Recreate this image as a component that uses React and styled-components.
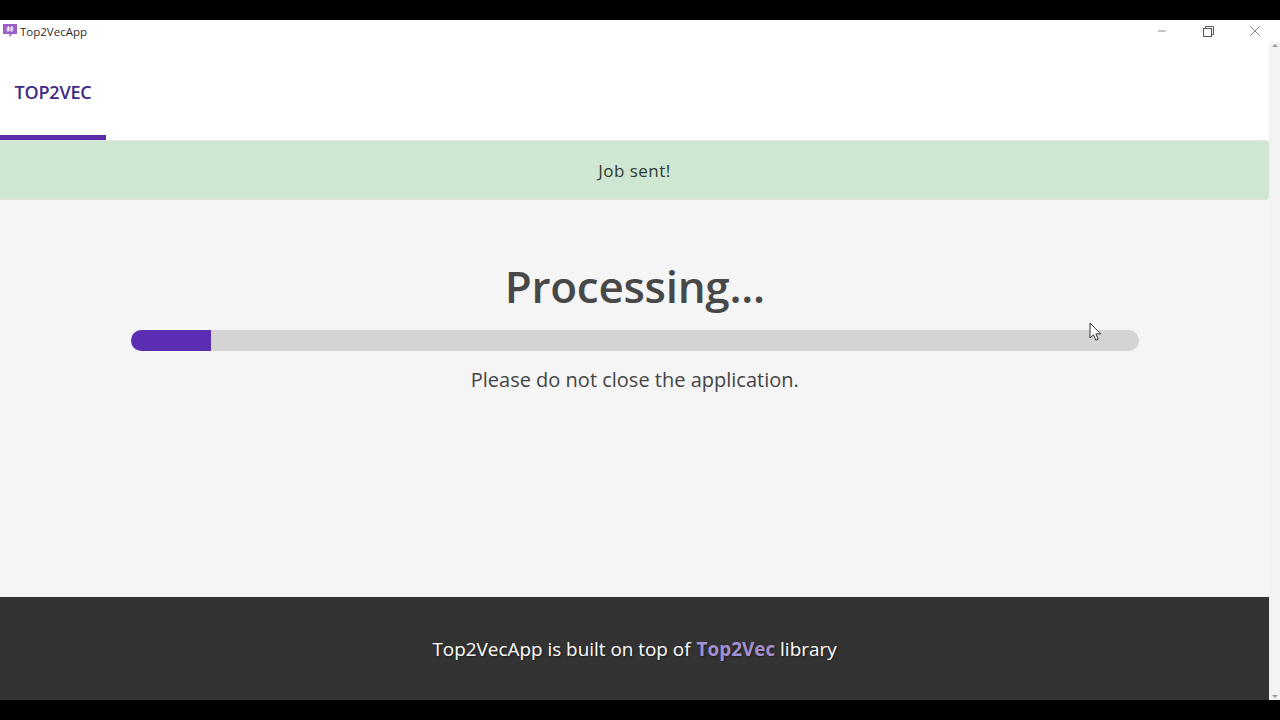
import styled, { createGlobalStyle } from "styled-components";
import { Minus, X } from "lucide-react";

const GlobalStyle = createGlobalStyle`
  html, body { margin: 0; padding: 0; background: #000; overflow: hidden; }
  body { font-family: "Open Sans", "Noto Sans", "Liberation Sans", sans-serif; }
`;

const Screen = styled.div`
  width: 1280px;
  height: 720px;
  display: flex;
  flex-direction: column;
  background: #000;
`;

const Letterbox = styled.div`
  height: 20px;
  flex: none;
  background: #000;
`;

const Window = styled.div`
  height: 680px;
  flex: none;
  display: flex;
  flex-direction: column;
  background: #fff;
`;

const TitleBar = styled.div`
  height: 22px;
  flex: none;
  display: flex;
  align-items: center;
  justify-content: space-between;
  background: #fff;
`;

const TitleLeft = styled.div`
  display: flex;
  align-items: center;
  gap: 3px;
  padding-left: 3px;
  font-size: 11.5px;
  color: #2b2b2b;
`;

const WindowButtons = styled.div`
  display: flex;
  align-items: center;
  padding-right: 2px;
  color: #666;
`;

const WindowButton = styled.div`
  width: 46.5px;
  height: 22px;
  display: flex;
  align-items: center;
  justify-content: center;
`;

const Body = styled.div`
  flex: 1;
  min-height: 0;
  display: flex;
`;

const Content = styled.div`
  flex: 1;
  min-width: 0;
  display: flex;
  flex-direction: column;
`;

const Scrollbar = styled.div`
  width: 11px;
  flex: none;
  display: flex;
  flex-direction: column;
  justify-content: space-between;
  align-items: center;
  background: #f3f3f3;
  padding: 2px 0;
  box-sizing: border-box;
`;

const Arrow = styled.div`
  width: 0;
  height: 0;
  border-left: 3px solid transparent;
  border-right: 3px solid transparent;
  ${(p) => (p.$down ? "border-top: 3px solid #999;" : "border-bottom: 3px solid #999;")}
`;

const Header = styled.div`
  height: 98px;
  flex: none;
  display: flex;
  align-items: stretch;
  background: #fff;
  border-bottom: 1px solid #e4e4e4;
`;

const Tab = styled.div`
  width: 106px;
  box-sizing: border-box;
  display: flex;
  align-items: center;
  justify-content: center;
  padding-top: 7px;
  border-bottom: 5px solid #5b2da8;
  font-size: 18px;
  font-weight: 600;
  letter-spacing: -0.2px;
  color: #3f2a86;
`;

const Banner = styled.div`
  height: 59px;
  flex: none;
  display: flex;
  align-items: center;
  justify-content: center;
  box-sizing: border-box;
  background: #cfe6d2;
  font-size: 17px;
  letter-spacing: 0.45px;
  color: #2f3a32;
  border-bottom: 1px solid #dfe6df;
  border-radius: 0 3px 3px 0;
`;

const Main = styled.div`
  flex: 1;
  min-height: 0;
  background: #f5f5f5;
  display: flex;
  flex-direction: column;
  align-items: center;
  padding: 56px 130.5px 0 131px;
`;

const Heading = styled.h1`
  margin: 0;
  font-size: 44px;
  line-height: 60px;
  font-weight: 600;
  letter-spacing: -0.3px;
  color: #484848;
`;

const Track = styled.div`
  width: 100%;
  height: 21px;
  margin-top: 14px;
  border-radius: 10.5px;
  background: #d4d4d4;
  overflow: hidden;
  flex: none;
`;

const Fill = styled.div`
  height: 100%;
  background: #5b2db0;
`;

const Note = styled.p`
  margin: 15px 0 0;
  font-size: 20px;
  line-height: 28px;
  color: #444;
`;

const Footer = styled.div`
  height: 103px;
  flex: none;
  display: flex;
  align-items: center;
  justify-content: center;
  padding-top: 1px;
  box-sizing: border-box;
  background: #333;
  color: #fff;
  font-size: 18.9px;
  text-shadow: 1px 1px 2px rgba(0, 0, 0, 0.4);
`;

const Accent = styled.strong`
  color: #a48fd0;
  font-weight: 700;
  margin: 0 5px 0 6px;
`;

const Pointer = styled.svg`
  position: absolute;
  left: 1089px;
  top: 322px;
`;

export default function App() {
  return (
    <Screen>
      <GlobalStyle />
      <Letterbox />
      <Window>
        <TitleBar>
          <TitleLeft>
            <svg width="14" height="14" viewBox="0 0 14 14">
              <path d="M0 0h14v10H9L6.5 13.5V10H0z" fill="#9b5fc8" />
              <path d="M5.5 2L5 8M9 2L8.5 8M3.5 4h7M3.5 6h7" stroke="#fff" strokeWidth="1" fill="none" />
            </svg>
            Top2VecApp
          </TitleLeft>
          <WindowButtons>
            <WindowButton>
              <Minus size={12} strokeWidth={1.5} />
            </WindowButton>
            <WindowButton>
              <svg width="11" height="11" viewBox="0 0 11 11" fill="none" stroke="#555">
                <rect x="0.5" y="2.5" width="8" height="8" />
                <path d="M2.5 2.5v-2h8v8h-2" />
              </svg>
            </WindowButton>
            <WindowButton>
              <X size={18} strokeWidth={1} />
            </WindowButton>
          </WindowButtons>
        </TitleBar>
        <Body>
          <Content>
            <Header>
              <Tab>TOP2VEC</Tab>
            </Header>
            <Banner>Job sent!</Banner>
            <Main>
              <Heading>Processing...</Heading>
              <Track>
                <Fill style={{ width: "80px" }} />
              </Track>
              <Note>Please do not close the application.</Note>
            </Main>
            <Footer>
              Top2VecApp is built on top of<Accent>Top2Vec</Accent>library
            </Footer>
          </Content>
          <Scrollbar>
            <Arrow />
            <Arrow $down />
          </Scrollbar>
        </Body>
      </Window>
      <Letterbox />
      <Pointer width="14" height="20" viewBox="0 0 14 20">
        <path d="M1 1v15l3.5-3.2 2.3 5.4 2.4-1-2.3-5.3h4.8z" fill="#fff" stroke="#333" strokeWidth="1" />
      </Pointer>
    </Screen>
  );
}
